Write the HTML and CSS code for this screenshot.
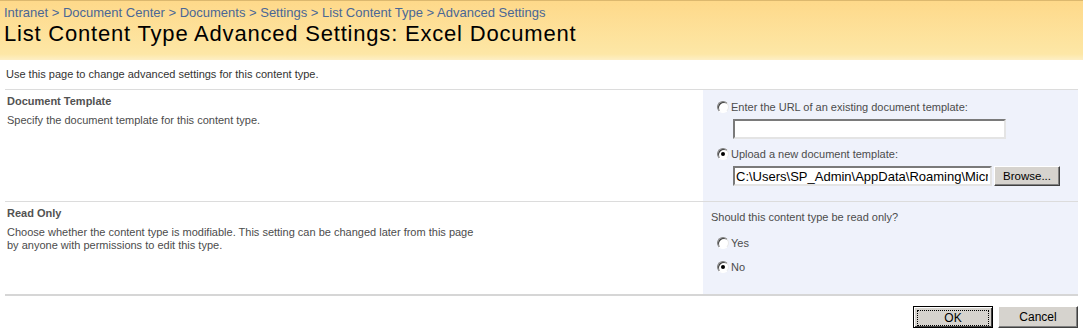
FILE: index.html
```html
<!DOCTYPE html>
<html lang="en">
<head>
    <meta charset="UTF-8">
    <meta name="viewport" content="width=device-width, initial-scale=1.0">
    <title>List Content Type Advanced Settings</title>
    <link rel="stylesheet" href="styles.css">
</head>
<body>
    <div class="title-area">
        <div class="crumbs">
            <a href="#">Intranet</a> &gt; <a href="#">Document Center</a> &gt; <a href="#">Documents</a> &gt;
            <a href="#">Settings</a> &gt; <a href="#">List Content Type</a> &gt; Advanced Settings
        </div>
        <h1 class="page-title">List Content Type Advanced Settings: Excel Document</h1>
    </div>

    <div class="page">
        <p class="intro">Use this page to change advanced settings for this content type.</p>

        <div class="section">
            <div class="sec-desc">
                <h3>Document Template</h3>
                <p>Specify the document template for this content type.</p>
            </div>
            <div class="sec-ctrl ctrl-template">
                <label class="opt"><input type="radio" name="tpl"> Enter the URL of an existing document template:</label>
                <div class="field"><input type="text" class="textbox url-box"></div>
                <label class="opt"><input type="radio" name="tpl" checked> Upload a new document template:</label>
                <div class="field">
                    <input type="text" class="textbox file-box" value="C:\Users\SP_Admin\AppData\Roaming\Microsoft\Templates\xl.xlsx">
                    <button class="btn browse">Browse...</button>
                </div>
            </div>
        </div>

        <div class="section last">
            <div class="sec-desc">
                <h3>Read Only</h3>
                <p class="wrap">Choose whether the content type is modifiable. This setting can be changed later from this page by anyone with permissions to edit this type.</p>
            </div>
            <div class="sec-ctrl ctrl-readonly">
                <div class="question">Should this content type be read only?</div>
                <label class="opt"><input type="radio" name="ro"> Yes</label>
                <label class="opt"><input type="radio" name="ro" checked> No</label>
            </div>
        </div>

        <div class="actions">
            <button class="btn action default"><span>OK</span></button>
            <button class="btn action">Cancel</button>
        </div>
    </div>
</body>
</html>
```

FILE: styles.css
```css
body {
    margin: 0;
    font-family: "Liberation Sans", Arial, sans-serif;
    font-size: 11px;
    color: #4c4c4c;
    background: #fff;
}
a {
    color: inherit;
    text-decoration: none;
}
.title-area {
    height: 59px;
    border-top: 1px solid #dcb86e;
    background: linear-gradient(#fed98a, #fde7a6 90%, #fdefc6);
    padding: 0 4px;
}
.crumbs {
    padding-top: 5px;
    color: #4a6796;
    font-size: 13px;
    line-height: 14px;
}
.page-title {
    margin: 2px 0 0;
    font-weight: normal;
    font-size: 22px;
    letter-spacing: 0.8px;
    line-height: 24px;
    color: #000;
}
.page {
    padding: 0 5px;
}
.intro {
    margin: 0;
    padding: 8px 1px 8px;
    line-height: 13px;
    color: #333;
    border-bottom: 1px solid #dcdcdc;
}
.section {
    display: grid;
    grid-template-columns: 698px 375px;
    border-bottom: 1px solid #dcdcdc;
}
.section.last {
    border-bottom: 2px solid #d6d6d6;
}
.sec-desc {
    padding: 5px 2px;
}
.sec-desc h3 {
    margin: 0;
    font-size: 11px;
    line-height: 13px;
    color: #525252;
}
.sec-desc p {
    margin: 6px 0 0;
    line-height: 13px;
}
.sec-desc p.wrap {
    width: 470px;
}
.sec-ctrl {
    background: #eff2fb;
}
.ctrl-template {
    padding: 10px 0 0 14px;
    height: 101px;
}
.ctrl-readonly {
    padding: 8px 0 0 8px;
    height: 84px;
}
.question {
    line-height: 14px;
    margin-bottom: 12px;
}
.ctrl-readonly .opt {
    margin: 0 0 10px 6px;
}
.opt {
    display: flex;
    align-items: center;
    gap: 2px;
    line-height: 14px;
}
.opt input {
    appearance: none;
    margin: 0;
    width: 12px;
    height: 12px;
    border-radius: 50%;
    border: 1px solid;
    border-color: #808080 #e8e8e8 #ffffff #808080;
    background: #fff;
    box-shadow: inset 1px 1px 0 #404040;
    position: relative;
}
.opt input:checked::after {
    content: "";
    position: absolute;
    left: 3px;
    top: 3px;
    width: 4px;
    height: 4px;
    border-radius: 50%;
    background: #000;
}
.field {
    display: flex;
    gap: 2px;
    margin: 5px 0 8px 16px;
}
.textbox {
    box-sizing: border-box;
    height: 20px;
    margin: 0;
    padding: 1px 2px;
    border: 2px solid;
    border-color: #7a7a7a #e4e4e4 #e4e4e4 #7a7a7a;
    background: #fff;
    font-family: "Liberation Sans", Arial, sans-serif;
    font-size: 13px;
    color: #000;
    outline: none;
}
.url-box {
    width: 273px;
}
.file-box {
    width: 259px;
    padding-left: 1px;
}
.btn {
    box-sizing: border-box;
    margin: 0;
    padding: 0;
    height: 20px;
    background: #d6d3ce;
    border: 1px solid;
    border-color: #fff #404040 #404040 #fff;
    box-shadow: inset -1px -1px 0 #808080;
    font-family: "Liberation Sans", Arial, sans-serif;
    font-size: 11.5px;
    color: #000;
}
.browse {
    width: 66px;
}
.actions {
    display: flex;
    justify-content: flex-end;
    gap: 5px;
    padding: 10px 0 0;
}
.action {
    width: 80px;
    height: 22px;
    font-size: 12px;
}
.action.default {
    border: 1px solid #000;
    box-shadow: inset 1px 1px 0 #fff, inset -1px -1px 0 #404040;
    padding: 3px;
}
.action.default span {
    display: block;
    height: 14px;
    line-height: 14px;
    border: 1px dotted #000;
}
```
